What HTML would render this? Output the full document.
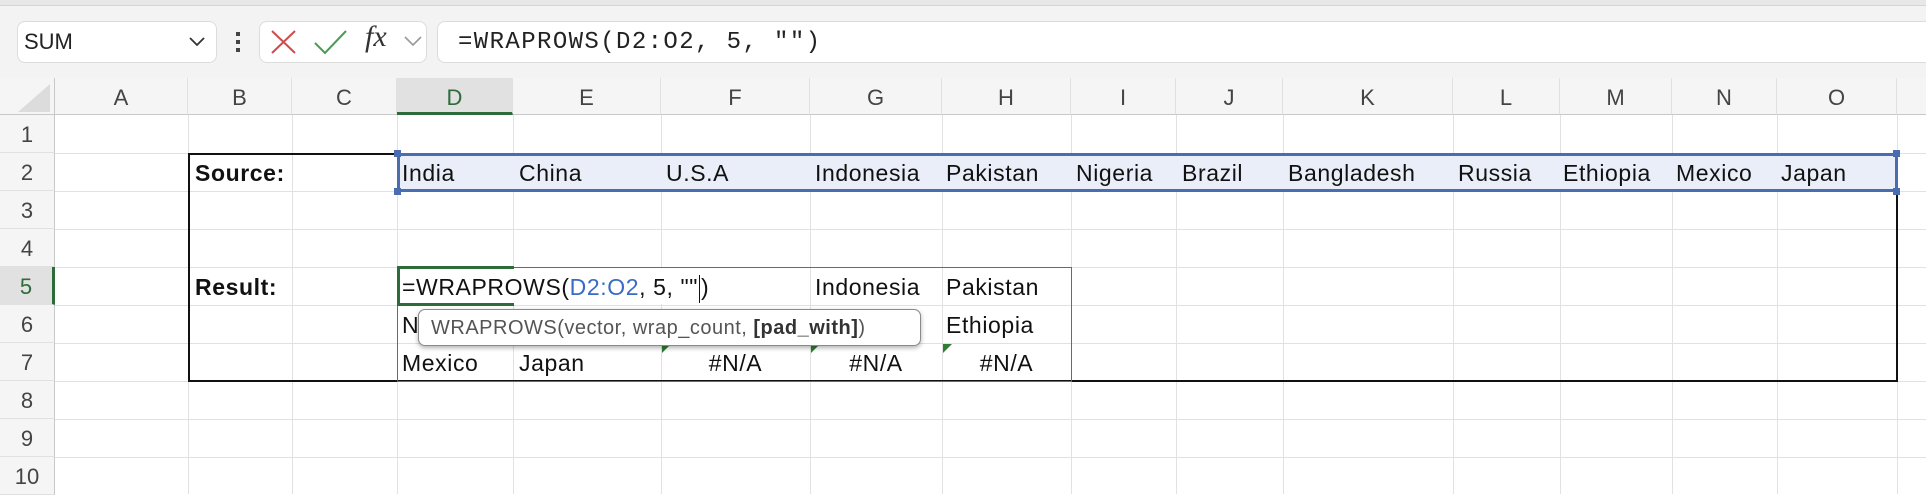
<!DOCTYPE html>
<html><head><meta charset="utf-8"><style>
*{margin:0;padding:0;box-sizing:border-box}
body{width:1926px;height:494px;overflow:hidden;background:#fff;font-family:"Liberation Sans",sans-serif;position:relative}
.a{position:absolute}
.top{left:0;top:0;width:1926px;height:78px;background:#f3f3f3}
.strip{left:0;top:0;width:1926px;height:6px;background:#e8e8e8;border-bottom:1px solid #d6d6d6}
.box{background:#fff;border:1px solid #dcdcdc;border-radius:8px}
.hdr{top:78px;height:37px;background:#f5f5f5;border-bottom:1px solid #c8c8c8;border-right:1px solid #e0e0e0;color:#444;font-size:22px;text-align:center;line-height:40px}
.rh{left:0;width:55px;height:38px;background:#f5f5f5;border-right:1px solid #c8c8c8;border-bottom:1px solid #e0e0e0;color:#444;font-size:22px;text-align:center;line-height:40px}
.vl{top:115px;height:379px;width:1px;background:#e1e1e1}
.hl{left:55px;width:1871px;height:1px;background:#e1e1e1}
.t{font-size:23px;letter-spacing:0.6px;color:#111;line-height:38px;white-space:nowrap}
.b{font-weight:bold}
.tri{width:0;height:0;border-top:9px solid #2e7d32;border-right:9px solid transparent}
</style></head><body>
<div class="a top"></div><div class="a strip"></div>
<div class="a box" style="left:17px;top:21px;width:200px;height:42px"></div>
<div class="a" style="left:24px;top:21px;line-height:42px;font-size:22px;color:#222">SUM</div>
<svg class="a" style="left:188px;top:34px" width="18" height="14"><path d="M2 4 L9 11 L16 4" stroke="#333" stroke-width="1.8" fill="none"/></svg>
<div class="a" style="left:236px;top:32px;width:4px;height:4px;background:#444"></div>
<div class="a" style="left:236px;top:40px;width:4px;height:4px;background:#444"></div>
<div class="a" style="left:236px;top:48px;width:4px;height:4px;background:#444"></div>
<div class="a box" style="left:259px;top:21px;width:168px;height:42px"></div>
<svg class="a" style="left:268px;top:28px" width="32" height="28"><path d="M4 3 L27 25 M27 3 L4 25" stroke="#d04a4a" stroke-width="2" fill="none"/></svg>
<svg class="a" style="left:312px;top:28px" width="38" height="28"><path d="M3 15 L13 25 L34 3" stroke="#4a9a55" stroke-width="2" fill="none"/></svg>
<div class="a" style="left:365px;top:20px;font-family:'Liberation Serif',serif;font-style:italic;font-size:30px;color:#333">fx</div>
<svg class="a" style="left:403px;top:34px" width="20" height="14"><path d="M2 3 L10 11 L18 3" stroke="#999" stroke-width="1.6" fill="none"/></svg>
<div class="a box" style="left:437px;top:21px;width:1500px;height:42px"></div>
<div class="a" style="left:458px;top:21px;line-height:44px;font-family:'Liberation Mono',monospace;font-size:24px;letter-spacing:1.4px;color:#222">=WRAPROWS(D2:O2, 5, "")</div>

<div class="a" style="left:0;top:78px;width:55px;height:37px;background:#f5f5f5;border-right:1px solid #c8c8c8;border-bottom:1px solid #c8c8c8"></div>
<svg class="a" style="left:14px;top:84px" width="36" height="28"><path d="M36 0 L36 28 L4 28Z" fill="#dcdcdc"/></svg>

<div class="a hdr" style="left:55px;width:133px">A</div>
<div class="a hdr" style="left:188px;width:104px">B</div>
<div class="a hdr" style="left:292px;width:105px">C</div>
<div class="a hdr" style="left:397px;width:116px;background:#e1e1e1;color:#2e6b3a;border-bottom:3px solid #2e6b3a">D</div>
<div class="a hdr" style="left:513px;width:148px">E</div>
<div class="a hdr" style="left:661px;width:149px">F</div>
<div class="a hdr" style="left:810px;width:132px">G</div>
<div class="a hdr" style="left:942px;width:129px">H</div>
<div class="a hdr" style="left:1071px;width:105px">I</div>
<div class="a hdr" style="left:1176px;width:107px">J</div>
<div class="a hdr" style="left:1283px;width:170px">K</div>
<div class="a hdr" style="left:1453px;width:107px">L</div>
<div class="a hdr" style="left:1560px;width:112px">M</div>
<div class="a hdr" style="left:1672px;width:105px">N</div>
<div class="a hdr" style="left:1777px;width:120px">O</div>
<div class="a hdr" style="left:1897px;width:29px;border-right:none"></div>

<div class="a rh" style="top:115px">1</div>
<div class="a rh" style="top:153px">2</div>
<div class="a rh" style="top:191px">3</div>
<div class="a rh" style="top:229px">4</div>
<div class="a rh" style="top:267px;background:#e1e1e1;color:#2e6b3a;border-right:3px solid #2e6b3a">5</div>
<div class="a rh" style="top:305px">6</div>
<div class="a rh" style="top:343px">7</div>
<div class="a rh" style="top:381px">8</div>
<div class="a rh" style="top:419px">9</div>
<div class="a rh" style="top:457px">10</div>

<div class="a vl" style="left:188px"></div><div class="a vl" style="left:292px"></div><div class="a vl" style="left:397px"></div><div class="a vl" style="left:513px"></div><div class="a vl" style="left:661px"></div><div class="a vl" style="left:810px"></div><div class="a vl" style="left:942px"></div><div class="a vl" style="left:1071px"></div><div class="a vl" style="left:1176px"></div><div class="a vl" style="left:1283px"></div><div class="a vl" style="left:1453px"></div><div class="a vl" style="left:1560px"></div><div class="a vl" style="left:1672px"></div><div class="a vl" style="left:1777px"></div><div class="a vl" style="left:1897px"></div>
<div class="a hl" style="top:153px"></div><div class="a hl" style="top:191px"></div><div class="a hl" style="top:229px"></div><div class="a hl" style="top:267px"></div><div class="a hl" style="top:305px"></div><div class="a hl" style="top:343px"></div><div class="a hl" style="top:381px"></div><div class="a hl" style="top:419px"></div><div class="a hl" style="top:457px"></div>

<div class="a" style="left:188px;top:153px;width:1710px;height:229px;border:2px solid #111"></div>
<div class="a" style="left:397px;top:153px;width:1501px;height:39px;background:#e9eef8;border:3px solid #4a6cb0"></div>
<div class="a" style="left:394px;top:150px;width:7px;height:7px;background:#4a6cb0"></div>
<div class="a" style="left:394px;top:188px;width:7px;height:7px;background:#4a6cb0"></div>
<div class="a" style="left:1893px;top:150px;width:7px;height:7px;background:#4a6cb0"></div>
<div class="a" style="left:1893px;top:188px;width:7px;height:7px;background:#4a6cb0"></div>
<div class="a b t" style="left:195px;top:154px">Source:</div>
<div class="a t" style="left:402px;top:154px">India</div>
<div class="a t" style="left:519px;top:154px">China</div>
<div class="a t" style="left:666px;top:154px">U.S.A</div>
<div class="a t" style="left:815px;top:154px">Indonesia</div>
<div class="a t" style="left:946px;top:154px">Pakistan</div>
<div class="a t" style="left:1076px;top:154px">Nigeria</div>
<div class="a t" style="left:1182px;top:154px">Brazil</div>
<div class="a t" style="left:1288px;top:154px">Bangladesh</div>
<div class="a t" style="left:1458px;top:154px">Russia</div>
<div class="a t" style="left:1563px;top:154px">Ethiopia</div>
<div class="a t" style="left:1676px;top:154px">Mexico</div>
<div class="a t" style="left:1781px;top:154px">Japan</div>

<div class="a" style="left:397px;top:267px;width:675px;height:115px;border:1px solid #4a6cb0"></div>
<div class="a" style="left:398px;top:268px;width:410px;height:36px;background:#fff"></div>
<div class="a" style="left:397px;top:266px;width:117px;height:40px;border:3px solid #2e6b3a;border-right:none"></div>
<div class="a" style="left:397px;top:266px;width:117px;height:3px;background:#2e6b3a"></div>
<div class="a b t" style="left:195px;top:268px">Result:</div>
<div class="a t" style="left:402px;top:268px">=WRAPROWS(<span style="color:#3a6bc4">D2:O2</span>, 5, ""<span style="display:inline-block;width:1px;height:28px;background:#111;vertical-align:middle;margin:0 1px"></span>)</div>
<div class="a t" style="left:815px;top:268px">Indonesia</div>
<div class="a t" style="left:946px;top:268px">Pakistan</div>
<div class="a t" style="left:402px;top:306px">N</div>
<div class="a t" style="left:946px;top:306px">Ethiopia</div>
<div class="a t" style="left:402px;top:344px">Mexico</div>
<div class="a t" style="left:519px;top:344px">Japan</div>
<div class="a t" style="left:661px;top:344px;width:149px;text-align:center">#N/A</div>
<div class="a t" style="left:810px;top:344px;width:132px;text-align:center">#N/A</div>
<div class="a t" style="left:942px;top:344px;width:129px;text-align:center">#N/A</div>
<div class="a tri" style="left:662px;top:344px"></div>
<div class="a tri" style="left:811px;top:344px"></div>
<div class="a tri" style="left:943px;top:344px"></div>

<div class="a" style="left:418px;top:309px;width:503px;height:37px;background:#fff;border:1px solid #8a8a8a;border-radius:7px;box-shadow:0 2px 5px rgba(0,0,0,.3);font-size:20px;letter-spacing:0.5px;color:#555;line-height:36px;padding-left:12px;white-space:nowrap">WRAPROWS(vector, wrap_count, <b style="color:#333">[pad_with]</b>)</div>
</body></html>
